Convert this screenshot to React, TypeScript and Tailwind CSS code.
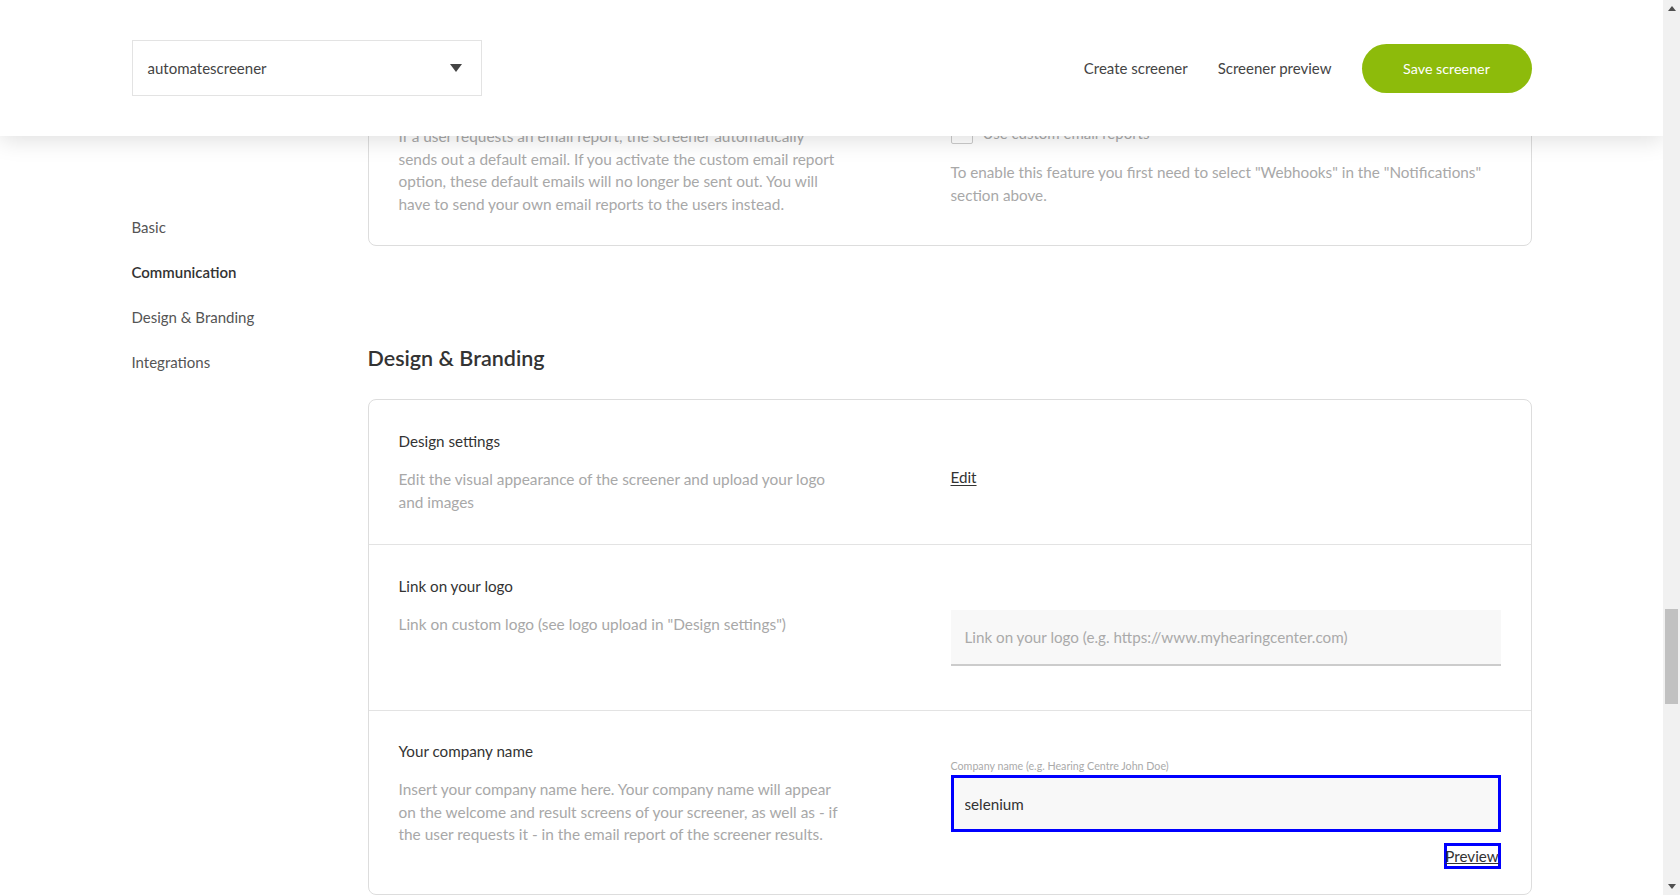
import { useState } from "react";

function Row({
  title,
  children,
  right,
  className = "",
}: {
  title: string;
  children: React.ReactNode;
  right: React.ReactNode;
  className?: string;
}) {
  return (
    <div className={`flex px-[30px] pt-[31px] pb-[30px] ${className}`}>
      <div className="w-[552px] pr-[60px]">
        <div className="text-[15.2px] leading-[20px] text-[#333]">{title}</div>
        <p className="mt-[17px] text-[15.4px] leading-[22.5px] text-[#a8a8a8] whitespace-nowrap">
          {children}
        </p>
      </div>
      <div className="flex-1">{right}</div>
    </div>
  );
}

export default function App() {
  const [company, setCompany] = useState("selenium");
  const [logoLink, setLogoLink] = useState("");

  return (
    <div className="flex h-screen w-full overflow-hidden bg-white font-[Lato,sans-serif] text-[#333]">
      <div className="relative flex-1 overflow-hidden">
        {/* fixed header */}
        <header className="absolute inset-x-0 top-0 z-10 h-[136px] bg-white shadow-[0_4px_22px_rgba(0,0,0,0.13)]">
          <div className="mx-auto flex h-full w-[1400px] items-center justify-between">
            <button className="flex h-[56px] w-[350px] items-center justify-between border border-[#e3e3e3] pl-[15px] pr-[19px] text-[15px] text-[#444]">
              <span>automatescreener</span>
              <svg width="12" height="8" viewBox="0 0 12 8">
                <path d="M0 0h12L6 8z" fill="#444" />
              </svg>
            </button>
            <div className="flex items-center gap-[30px] text-[15px] text-[#444]">
              <a className="cursor-pointer">Create screener</a>
              <a className="cursor-pointer">Screener preview</a>
              <button className="mt-[1px] h-[49px] w-[170px] rounded-full bg-[#8dbb0b] text-[14.3px] text-white">
                Save screener
              </button>
            </div>
          </div>
        </header>

        <div className="mx-auto flex w-[1400px]">
          {/* side nav */}
          <nav className="flex w-[236px] flex-col gap-[21px] pt-[215px] text-[15px] leading-[24px] text-[#555]">
            <a>Basic</a>
            <a className="font-semibold text-[#333]">Communication</a>
            <a>Design &amp; Branding</a>
            <a>Integrations</a>
          </nav>

          <main className="w-[1164px] pt-[57px]">
            {/* Communication card (scrolled under header) */}
            <div className="rounded-[8px] border border-[#dddddd]">
              <Row
                title="Custom email report"
                className="!pt-[30px]"
                right={
                  <div className="pt-[34px]">
                    <label className="flex items-center gap-[10px] text-[15px] text-[#aaa]">
                      <span className="h-[22px] w-[22px] rounded-[2px] border border-[#ccc] bg-white" />
                      Use custom email reports
                    </label>
                    <p className="mt-[16px] text-[15.25px] leading-[23.5px] text-[#a8a8a8]">
                      To enable this feature you first need to select "Webhooks" in the "Notifications"
                      <br />
                      section above.
                    </p>
                  </div>
                }
              >
                If a user requests an email report, the screener automatically
                <br />
                sends out a default email. If you activate the custom email report
                <br />
                option, these default emails will no longer be sent out. You will
                <br />
                have to send your own email reports to the users instead.
              </Row>
            </div>

            <h2 className="mt-[97px] text-[21.5px] font-semibold leading-[30px] text-[#333]">
              Design &amp; Branding
            </h2>

            <div className="mt-[26px] rounded-[8px] border border-[#dddddd]">
              <Row
                title="Design settings"
                className="border-b border-[#e3e3e3] !pb-[31px]"
                right={
                  <div className="pt-[35px] text-[15.2px] leading-[22px]">
                    <a className="cursor-pointer text-[#333] underline underline-offset-2">Edit</a>
                  </div>
                }
              >
                Edit the visual appearance of the screener and upload your logo
                <br />
                and images
              </Row>

              <Row
                title="Link on your logo"
                className="border-b border-[#e3e3e3]"
                right={
                  <div className="pt-[34px] pb-[14px]">
                    <input
                      value={logoLink}
                      onChange={(e) => setLogoLink(e.target.value)}
                      placeholder="Link on your logo (e.g. https://www.myhearingcenter.com)"
                      className="box-border h-[56px] w-full border-b-2 border-[#cccccc] bg-[#f8f8f8] px-[14px] text-[15.2px] text-[#333] outline-none placeholder:text-[#aaa]"
                    />
                  </div>
                }
              >
                Link on custom logo (see logo upload in "Design settings")
              </Row>

              <Row
                title="Your company name"
                className="!pt-[30px] !pb-[25px]"
                right={
                  <div className="pt-[16px]">
                    <div className="text-[10.7px] leading-[18px] text-[#aaa]">
                      Company name (e.g. Hearing Centre John Doe)
                    </div>
                    <input
                      value={company}
                      onChange={(e) => setCompany(e.target.value)}
                      className="box-border h-[57px] w-full border-[3px] border-[#0000ff] bg-[#f8f8f8] px-[11px] text-[15.2px] text-[#333] outline-none"
                    />
                    <div className="mt-[11px] flex justify-end">
                      <a className="box-border flex h-[26px] w-[57px] cursor-pointer items-center justify-center border-[3px] border-[#0000ff] text-[15.2px] leading-[18px] text-[#333] underline">
                        Preview
                      </a>
                    </div>
                  </div>
                }
              >
                Insert your company name here. Your company name will appear
                <br />
                on the welcome and result screens of your screener, as well as - if
                <br />
                the user requests it - in the email report of the screener results.
              </Row>
            </div>
          </main>
        </div>
      </div>

      {/* window scrollbar */}
      <div className="flex w-[17px] flex-col bg-[#f1f1f1]">
        <div className="flex h-[17px] items-center justify-center">
          <svg width="8" height="5" viewBox="0 0 8 5">
            <path d="M0 5h8L4 0z" fill="#505050" />
          </svg>
        </div>
        <div className="flex-1">
          <div className="mx-[2px] mt-[592px] h-[95px] bg-[#c1c1c1]" />
        </div>
        <div className="flex h-[17px] items-center justify-center">
          <svg width="8" height="5" viewBox="0 0 8 5">
            <path d="M0 0h8L4 5z" fill="#505050" />
          </svg>
        </div>
      </div>
    </div>
  );
}
